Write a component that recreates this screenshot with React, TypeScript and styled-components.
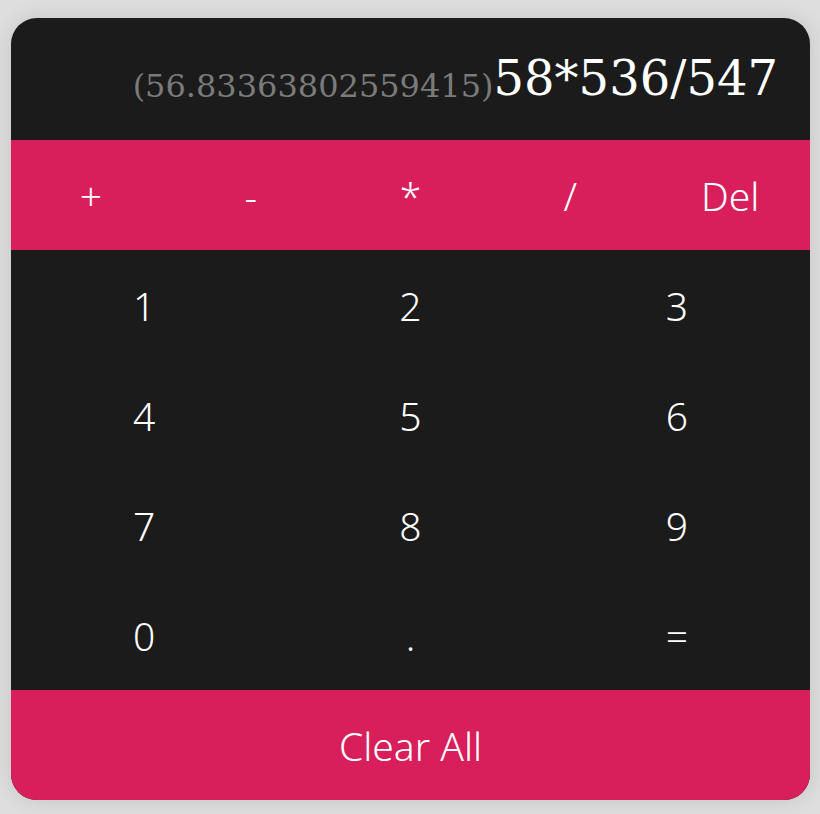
import React, { useState } from 'react';
import styled, { createGlobalStyle } from 'styled-components';

const GlobalStyle = createGlobalStyle`
  * { box-sizing: border-box; }
  body {
    margin: 0;
    background-color: #dedede;
    font-family: "Noto Sans", sans-serif;
  }
`;

const Page = styled.div`
  min-height: 814px;
  padding: 18px 10px 14px 11px;
`;

const Calculator = styled.div`
  width: 799px;
  border-radius: 26px;
  overflow: hidden;
  background-color: #1b1b1b;
  box-shadow: 0 0 20px rgba(0, 0, 0, 0.12);
`;

const Display = styled.div`
  height: 122px;
  padding: 0 32px 38px;
  display: flex;
  justify-content: flex-end;
  align-items: flex-end;
  font-family: "DejaVu Serif", serif;
  color: #ffffff;
  white-space: nowrap;
`;

const Preview = styled.span`
  font-size: 32px;
  color: #7a7a7a;
  line-height: 1;
`;

const Expression = styled.span`
  font-size: 48px;
  line-height: 1;
`;

const Operators = styled.div`
  display: grid;
  grid-template-columns: repeat(5, 1fr);
  background-color: #d81e5b;
`;

const Digits = styled.div`
  display: grid;
  grid-template-columns: repeat(3, 1fr);
`;

const Key = styled.button`
  height: 110px;
  border: none;
  background: transparent;
  color: #ffffff;
  font-family: "Noto Sans", sans-serif;
  font-weight: 300;
  font-size: 39px;
  cursor: pointer;
  padding: 0;
`;

const ClearButton = styled(Key)`
  display: block;
  width: 100%;
  background-color: #d81e5b;
`;

const operators = ['+', '-', '*', '/', 'Del'];
const digits = ['1', '2', '3', '4', '5', '6', '7', '8', '9', '0', '.', '='];

export default function App() {
  const [expr] = useState('58*536/547');
  const result = '(56.83363802559415)';

  return (
    <>
      <GlobalStyle />
      <Page>
        <Calculator>
          <Display>
            <Preview>{result}</Preview>
            <Expression>{expr}</Expression>
          </Display>
          <Operators>
            {operators.map((op) => (
              <Key key={op}>{op}</Key>
            ))}
          </Operators>
          <Digits>
            {digits.map((d) => (
              <Key key={d}>{d}</Key>
            ))}
          </Digits>
          <ClearButton>Clear All</ClearButton>
        </Calculator>
      </Page>
    </>
  );
}
